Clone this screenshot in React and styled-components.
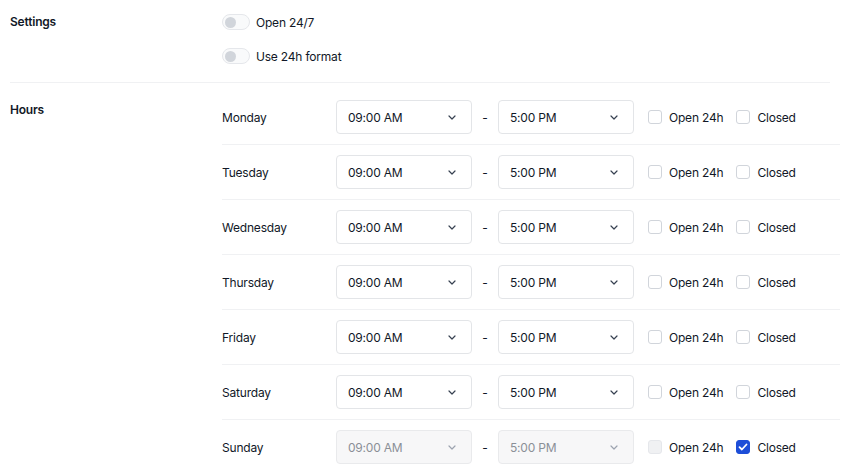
import styled, { createGlobalStyle } from "styled-components"

const GlobalStyle = createGlobalStyle`
    body {
        margin: 0;
        background: #ffffff;
        font-family: Inter, "Noto Sans", sans-serif;
        color: #111827;
        font-size: 12px;
        letter-spacing: -0.2px;
    }
`;

const Page = styled.div`
    padding: 0 15px 0 10px;
`;

const Section = styled.section`
    display: flex;
    padding: ${p => p.$pad};
    border-bottom: ${p => p.$divider ? "1px solid #f0f1f3" : "none"};
    width: 820px;
`;

const SectionLabel = styled.div`
    width: 212px;
    flex-shrink: 0;
    font-weight: 600;
    line-height: ${p => p.$lh}px;
    margin-top: ${p => p.$mt || 0}px;
`;

const SectionBody = styled.div`
    display: flex;
    flex-direction: column;
    gap: ${p => p.$gap || 0}px;
    flex: 1;
`;

const ToggleRow = styled.label`
    display: flex;
    align-items: center;
    gap: 6px;
    height: 28px;
`;

const Track = styled.span`
    box-sizing: border-box;
    width: 28px;
    height: 16px;
    border-radius: 8px;
    border: 1px solid #e5e7eb;
    background: #f9fafb;
    display: flex;
    align-items: center;
    padding: 0 2px;

    &::after {
        content: "";
        width: 11px;
        height: 11px;
        border-radius: 50%;
        background: #d1d5db;
    }
`;

const DayRow = styled.div`
    display: flex;
    align-items: center;
    padding: 10px 0;
    width: 618px;
    border-bottom: ${p => p.$last ? "none" : "1px solid #f0f1f3"};
`;

const DayName = styled.div`
    width: 114px;
    flex-shrink: 0;
    padding-top: 1px;
`;

const Select = styled.div`
    box-sizing: border-box;
    width: 136px;
    height: 34px;
    border: 1px solid ${p => p.$disabled ? "#e9eaec" : "#e3e5e8"};
    border-radius: 4px;
    background: ${p => p.$disabled ? "#f7f7f8" : "#ffffff"};
    color: ${p => p.$disabled ? "#8b8f97" : "#111827"};
    display: flex;
    align-items: center;
    justify-content: space-between;
    padding: 1px 15px 0 11px;
`;

const Dash = styled.span`
    width: 26px;
    text-align: center;
`;

const CheckLabel = styled.label`
    display: flex;
    align-items: center;
    gap: 7px;
    margin-left: ${p => p.$ml}px;
`;

const Box = styled.span`
    box-sizing: border-box;
    width: 14px;
    height: 14px;
    border-radius: 3px;
    border: 1px solid ${p => p.$checked ? "#1d4ed8" : p.$disabled ? "#e5e7eb" : "#d1d5db"};
    background: ${p => p.$checked ? "#1d4ed8" : p.$disabled ? "#f0f1f3" : "#ffffff"};
    display: flex;
    align-items: center;
    justify-content: center;
`;

const Chevron = ({ color }) => (
    <svg width="8" height="5" viewBox="0 0 8 5" fill="none">
        <path d="M1 1l3 3 3-3" stroke={color} strokeWidth="1.2" strokeLinecap="round" strokeLinejoin="round" />
    </svg>
)

const Tick = () => (
    <svg width="10" height="8" viewBox="0 0 10 8" fill="none">
        <path d="M1.5 4.2l2.4 2.3L8.5 1.5" stroke="#ffffff" strokeWidth="1.8" strokeLinecap="round" strokeLinejoin="round" />
    </svg>
)

const days = ["Monday", "Tuesday", "Wednesday", "Thursday", "Friday", "Saturday", "Sunday"]

const App = () => {
    return (
        <Page>
            <GlobalStyle />
            <Section $pad="8px 0 12px" $divider>
                <SectionLabel $lh={28}>Settings</SectionLabel>
                <SectionBody $gap={6}>
                    <ToggleRow><Track />Open 24/7</ToggleRow>
                    <ToggleRow><Track />Use 24h format</ToggleRow>
                </SectionBody>
            </Section>
            <Section $pad="7px 0 0">
                <SectionLabel $lh={20} $mt={10}>Hours</SectionLabel>
                <SectionBody>
                    {days.map((d, i) => {
                        const closed = d === "Sunday"
                        return (
                            <DayRow key={d} $last={i === days.length - 1}>
                                <DayName>{d}</DayName>
                                <Select $disabled={closed}>
                                    09:00 AM
                                    <Chevron color={closed ? "#9ca3af" : "#374151"} />
                                </Select>
                                <Dash>-</Dash>
                                <Select $disabled={closed}>
                                    5:00 PM
                                    <Chevron color={closed ? "#9ca3af" : "#374151"} />
                                </Select>
                                <CheckLabel $ml={14}>
                                    <Box $disabled={closed} />
                                    Open 24h
                                </CheckLabel>
                                <CheckLabel $ml={13}>
                                    <Box $checked={closed}>{closed && <Tick />}</Box>
                                    Closed
                                </CheckLabel>
                            </DayRow>
                        )
                    })}
                </SectionBody>
            </Section>
        </Page>
    )
}

export default App
